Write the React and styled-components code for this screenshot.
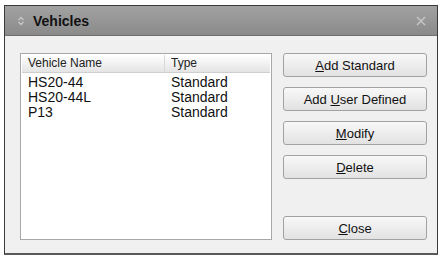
import React from 'react'
import styled, { createGlobalStyle } from 'styled-components'

const GlobalStyle = createGlobalStyle`
  body {
    margin: 0;
    background: #ffffff;
    font-family: "Liberation Sans", Arial, sans-serif;
  }
`

const vehicles = [
  { name: 'HS20-44', type: 'Standard' },
  { name: 'HS20-44L', type: 'Standard' },
  { name: 'P13', type: 'Standard' },
]

const buttons = [
  { key: 'A', rest: 'dd Standard' },
  { pre: 'Add ', key: 'U', rest: 'ser Defined' },
  { key: 'M', rest: 'odify' },
  { key: 'D', rest: 'elete' },
]

const App = () => {
  return (
    <Page>
      <GlobalStyle />
      <Window>
        <TitleBar>
          <TitleIcon viewBox='0 0 8 10'>
            <path d='M1.5 4 L4 1.5 L6.5 4 M1.5 6 L4 8.5 L6.5 6' fill='none' stroke='#c8c8c8' strokeWidth='1.3' />
          </TitleIcon>
          <Title>Vehicles</Title>
          <CloseIcon viewBox='0 0 10 10'>
            <path d='M1 1 L9 9 M9 1 L1 9' stroke='#c4c4c4' strokeWidth='1.6' />
          </CloseIcon>
        </TitleBar>
        <Body>
          <ListBox>
            <HeaderRow>
              <HeadCell width={143}>Vehicle Name</HeadCell>
              <HeadCell>Type</HeadCell>
            </HeaderRow>
            <Rows>
              {vehicles.map(v => (
                <Row key={v.name}>
                  <Cell width={143}>{v.name}</Cell>
                  <Cell>{v.type}</Cell>
                </Row>
              ))}
            </Rows>
          </ListBox>
          <Buttons>
            {buttons.map(b => (
              <Button key={b.key}>
                <span>
                  {b.pre}
                  <u>{b.key}</u>
                  {b.rest}
                </span>
              </Button>
            ))}
            <Button bottom>
              <span>
                <u>C</u>lose
              </span>
            </Button>
          </Buttons>
        </Body>
      </Window>
    </Page>
  )
}

const Page = styled.div`
  padding: 5px 0 0 4px;
  width: 442px;
  height: 259px;
  box-sizing: border-box;
`

const Window = styled.div`
  width: 434px;
  height: 250px;
  box-sizing: border-box;
  border: 1px solid #3a3a3a;
  border-bottom: 2px solid #5a5a5a;
  background: #f0f0f0;
  display: flex;
  flex-direction: column;
`

const TitleBar = styled.div`
  height: 30px;
  box-sizing: border-box;
  border-bottom: 1px solid #6e6e6e;
  background: linear-gradient(#a2a2a2, #8a8a8a);
  display: flex;
  align-items: center;
  padding: 0 11px 0 12px;
`

const TitleIcon = styled.svg`
  width: 8px;
  height: 10px;
  margin-right: 8px;
`

const Title = styled.div`
  font-weight: bold;
  font-size: 14px;
  color: #111;
  flex: 1;
`

const CloseIcon = styled.svg`
  width: 10px;
  height: 10px;
`

const Body = styled.div`
  flex: 1;
  display: flex;
  padding: 17px 10px 13px 15px;
  gap: 11px;
`

const ListBox = styled.div`
  width: 252px;
  box-sizing: border-box;
  border: 1px solid #a8a8a8;
  background: #fff;
  padding: 1px;
`

const HeaderRow = styled.div`
  display: flex;
  height: 18px;
  box-sizing: border-box;
  background: linear-gradient(#ffffff, #e4e4e4);
  border-bottom: 1px solid #cfcfcf;
`

const HeadCell = styled.div`
  width: ${p => (p.width ? p.width + 'px' : 'auto')};
  flex: ${p => (p.width ? 'none' : 1)};
  box-sizing: border-box;
  padding-left: 6px;
  font-size: 12px;
  line-height: 17px;
  color: #222;
  border-right: ${p => (p.width ? '1px solid #d8d8d8' : 'none')};
`

const Rows = styled.div`
  padding-top: 2px;
`

const Row = styled.div`
  display: flex;
  height: 15px;
`

const Cell = styled.div`
  width: ${p => (p.width ? p.width + 'px' : 'auto')};
  flex: ${p => (p.width ? 'none' : 1)};
  box-sizing: border-box;
  padding-left: 6px;
  font-size: 14px;
  line-height: 15px;
  color: #111;
`

const Buttons = styled.div`
  flex: 1;
  display: flex;
  flex-direction: column;
  gap: 10px;
`

const Button = styled.div`
  height: 24px;
  box-sizing: border-box;
  border: 1px solid #a2a2a2;
  border-radius: 3px;
  background: linear-gradient(#f8f8f8, #e2e2e2);
  display: flex;
  align-items: center;
  justify-content: center;
  font-size: 13px;
  color: #111;
  margin-top: ${p => (p.bottom ? 'auto' : 0)};
  u {
    text-decoration-thickness: 1px;
  }
`

export default App
